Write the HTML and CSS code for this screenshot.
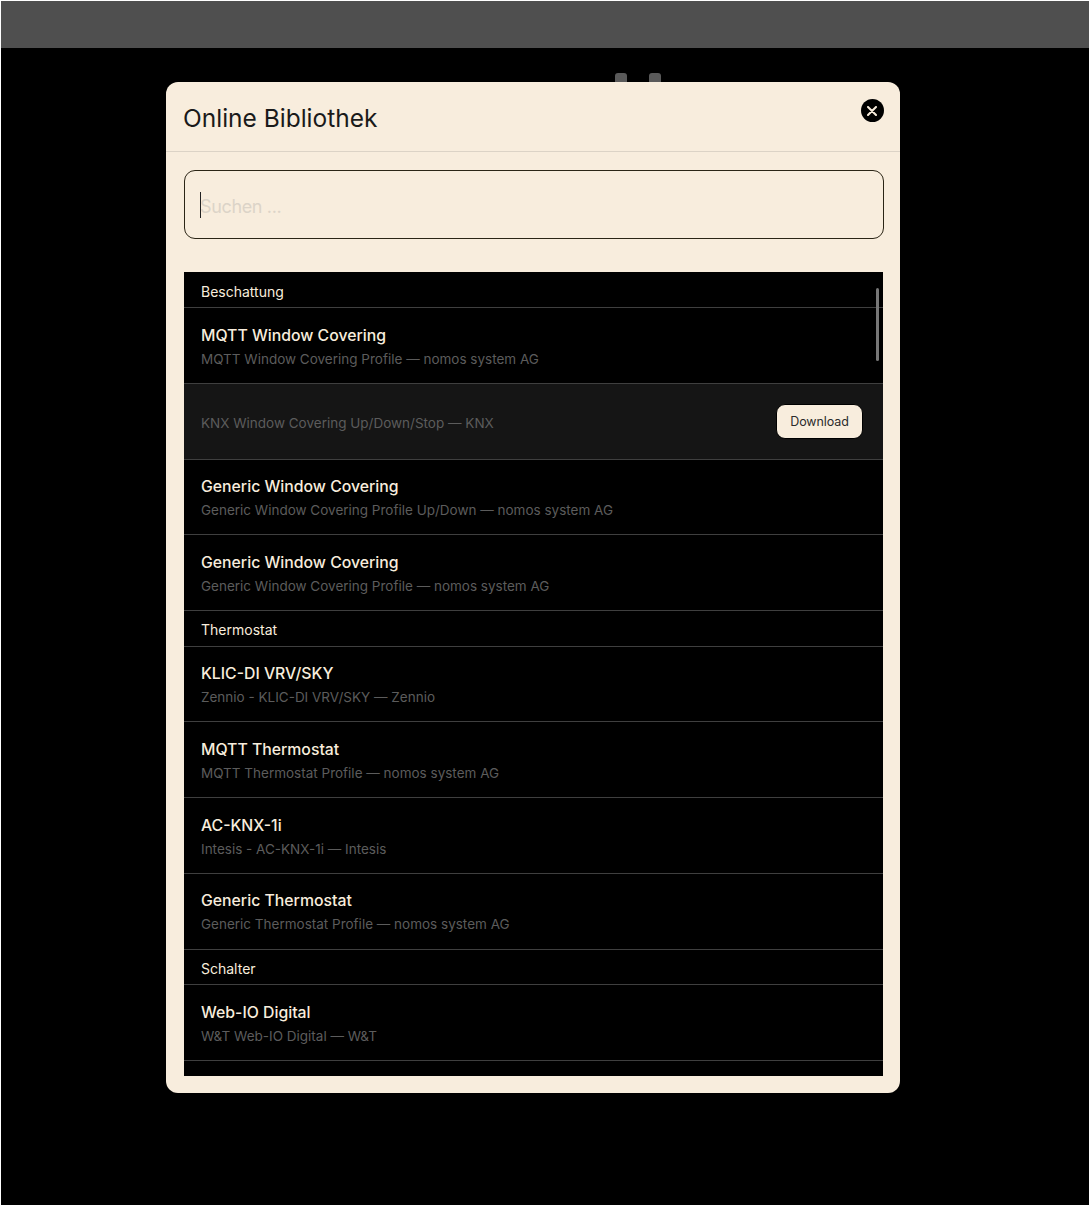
FILE: index.html
```html
<!DOCTYPE html>
<html lang="en">
<head>
  <meta charset="UTF-8">
  <title>Online Bibliothek</title>
  <link rel="stylesheet" href="styles.css">
</head>
<body>
  <div class="screen">
    <div class="topbar"></div>
    <div class="stage">
      <div class="tabs-peek"><span></span><span></span></div>
      <div class="modal">
        <div class="modal-header">
          <h2>Online Bibliothek</h2>
          <button class="close-btn" aria-label="Close">
            <svg width="10" height="10" viewBox="0 0 10 10"><path d="M1 1L9 9M9 1L1 9" stroke="#f8eddd" stroke-width="2" stroke-linecap="round"/></svg>
          </button>
        </div>
        <div class="search-row">
          <div class="search">
            <span class="caret"></span>
            <input type="text" placeholder="Suchen ...">
          </div>
        </div>
        <div class="list">
          <span class="scroll-thumb"></span>
          <div class="group">Beschattung</div>
          <div class="item">
            <div class="name">MQTT Window Covering</div>
            <div class="desc">MQTT Window Covering Profile — nomos system AG</div>
          </div>
          <div class="item hover">
            <div class="desc">KNX Window Covering Up/Down/Stop — KNX</div>
            <button class="download">Download</button>
          </div>
          <div class="item">
            <div class="name">Generic Window Covering</div>
            <div class="desc">Generic Window Covering Profile Up/Down — nomos system AG</div>
          </div>
          <div class="item">
            <div class="name">Generic Window Covering</div>
            <div class="desc">Generic Window Covering Profile — nomos system AG</div>
          </div>
          <div class="group">Thermostat</div>
          <div class="item">
            <div class="name">KLIC-DI VRV/SKY</div>
            <div class="desc">Zennio - KLIC-DI VRV/SKY — Zennio</div>
          </div>
          <div class="item">
            <div class="name">MQTT Thermostat</div>
            <div class="desc">MQTT Thermostat Profile — nomos system AG</div>
          </div>
          <div class="item">
            <div class="name">AC-KNX-1i</div>
            <div class="desc">Intesis - AC-KNX-1i — Intesis</div>
          </div>
          <div class="item">
            <div class="name">Generic Thermostat</div>
            <div class="desc">Generic Thermostat Profile — nomos system AG</div>
          </div>
          <div class="group">Schalter</div>
          <div class="item">
            <div class="name">Web-IO Digital</div>
            <div class="desc">W&amp;T Web-IO Digital — W&amp;T</div>
          </div>
        </div>
      </div>
    </div>
  </div>
</body>
</html>
```

FILE: styles.css
```css
* {
  box-sizing: border-box;
}
html, body {
  margin: 0;
  padding: 0;
  height: 100%;
}
body {
  background-color: #fff;
  padding: 1px;
  font-family: Inter, "Liberation Sans", sans-serif;
  overflow: hidden;
}
.screen {
  height: 1204px;
  background-color: #000;
}
.topbar {
  height: 47px;
  background-color: #4f4f4f;
}
.stage {
  position: relative;
  padding: 34px 0 0 165px;
}
.tabs-peek {
  position: absolute;
  left: 614px;
  top: 25px;
  display: flex;
  gap: 22px;
}
.tabs-peek span {
  width: 12px;
  height: 14px;
  border-radius: 3px;
  background-color: #5a5a5a;
}
.modal {
  position: relative;
  width: 734px;
  height: 1011px;
  background-color: #f8eddd;
  border-radius: 12px;
}
.modal-header {
  height: 70px;
  padding: 0 16.5px 0 17px;
  display: flex;
  justify-content: space-between;
  border-bottom: 1px solid #dcd3c6;
}
.modal-header h2 {
  margin: 19.5px 0 0;
  font-size: 24.5px;
  line-height: 32px;
  font-weight: 400;
  color: #1a1a1a;
}
.close-btn {
  width: 23px;
  height: 23px;
  margin-top: 17px;
  padding: 0;
  border: none;
  border-radius: 50%;
  background-color: #000;
  display: flex;
  align-items: center;
  justify-content: center;
}
.search-row {
  padding: 18px 16px 0 18px;
}
.search {
  position: relative;
  height: 69px;
  border: 1px solid #2b2516;
  border-radius: 11px;
}
.search input {
  width: 100%;
  height: 100%;
  padding: 3px 15px 0;
  border: none;
  outline: none;
  background: transparent;
  font-family: inherit;
  font-size: 18px;
  letter-spacing: -0.35px;
}
.search input::placeholder {
  color: #dcd4c8;
}
.caret {
  position: absolute;
  left: 15px;
  top: 21px;
  width: 1px;
  height: 26px;
  background-color: #222;
}
.list {
  position: relative;
  height: 804px;
  margin: 33px 17px 0 18px;
  padding-top: 0.5px;
  background-color: #000;
  overflow: hidden;
}
.scroll-thumb {
  position: absolute;
  top: 16px;
  right: 4px;
  width: 3px;
  height: 73px;
  border-radius: 2px;
  background-color: #777;
}
.group {
  height: 35.5px;
  padding: 10px 17px 0;
  font-size: 14px;
  line-height: 18px;
  color: #f8eddd;
  border-bottom: 1px solid #3f3f3f;
}
.item {
  height: 75.75px;
  padding: 15.5px 17px 0;
  border-bottom: 1px solid #3f3f3f;
}
.item.hover {
  display: flex;
  justify-content: space-between;
  align-items: center;
  padding: 0 20px 0 17px;
  background-color: #151515;
}
.item.hover .desc {
  padding-top: 3px;
}
.name {
  font-size: 15.8px;
  line-height: 24px;
  font-weight: 500;
  color: #f8eddd;
}
.desc {
  font-size: 13.5px;
  line-height: 22px;
  color: #5c5c5c;
}
.download {
  width: 87px;
  height: 35px;
  padding: 0;
  border: 1px solid #000;
  border-radius: 9px;
  background-color: #f8eddd;
  font-family: inherit;
  font-size: 12.5px;
  letter-spacing: -0.1px;
  color: #2b2b2b;
}
```
